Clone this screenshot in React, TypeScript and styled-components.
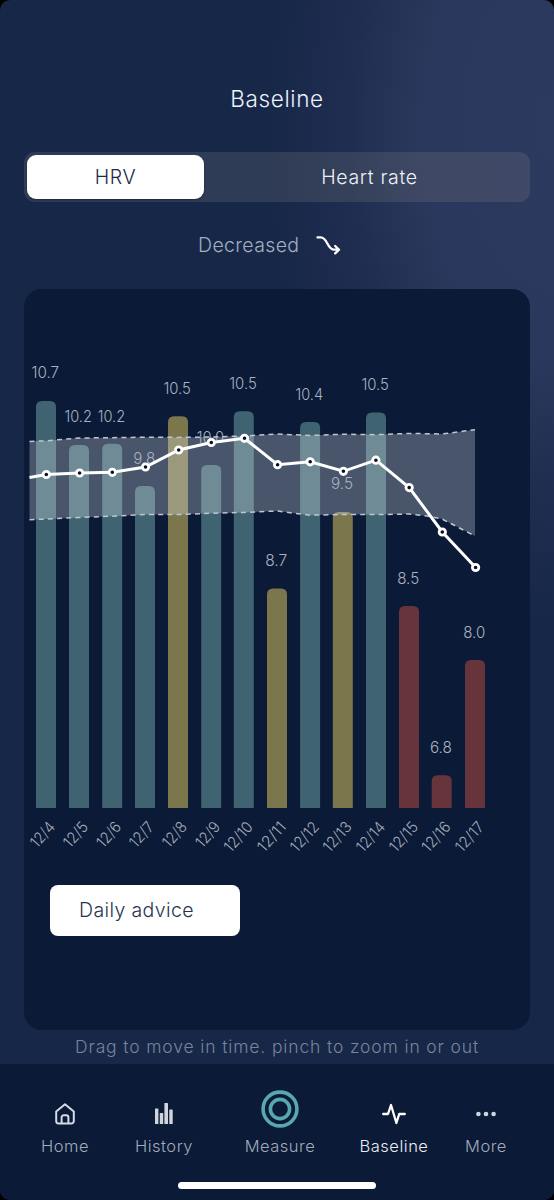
import React from "react";
import styled, { createGlobalStyle, css } from "styled-components";

const GlobalStyle = createGlobalStyle`
  * { box-sizing: border-box; }
  html, body { margin: 0; background: #000; }
  body, button { font-family: Inter, "Liberation Sans", sans-serif; font-weight: 350; }
`;

const Screen = styled.div`
  width: 554px;
  height: 1200px;
  display: flex;
  flex-direction: column;
  overflow: hidden;
  border-radius: 10px;
  background:
    radial-gradient(ellipse 290px 500px at 554px 130px, #2d3a60 0%, #2b385d 45%, rgba(36, 50, 85, 0.65) 70%, rgba(23, 39, 72, 0) 100%),
    #172748;
`;

const Header = styled.header`
  padding-top: 84px;
  height: 152px;
  text-align: center;
`;

const Title = styled.h1`
  margin: 0;
  color: #eef2fb;
  font-size: 22.5px;
  line-height: 29px;
  font-weight: 350;
  letter-spacing: 0.65px;
`;

const Segments = styled.div`
  display: flex;
  margin: 0 24px;
  height: 50px;
  padding: 3px;
  border-radius: 11px;
  background: rgba(128, 128, 128, 0.23);
`;

const Segment = styled.button<{ $active?: boolean }>`
  border: 0;
  padding: 0;
  border-radius: 9px;
  font-size: 19.5px;
  letter-spacing: 0.65px;
  ${({ $active }) =>
    $active
      ? css`
          width: 177px;
          background: #fff;
          color: #1b2a4a;
          box-shadow: 0 1px 2px rgba(0, 0, 0, 0.35);
        `
      : css`
          flex: 1;
          padding-left: 8px;
          background: transparent;
          color: #eef1f8;
        `}
`;

const Trend = styled.div`
  display: flex;
  align-items: center;
  height: 87px;
  padding: 0 0 2px 198px;
  gap: 17px;
  color: #a3aec1;
  font-size: 19.5px;
  letter-spacing: 0.35px;
`;

const Card = styled.main`
  margin: 0 24px;
  height: 741px;
  border-radius: 18px;
  background: #0b1a37;
  flex-shrink: 0;
`;

const Chart = styled.svg`
  display: block;
  font-size: 15.5px;
`;

const AdviceButton = styled.button`
  display: flex;
  align-items: center;
  margin: 20px 0 0 26px;
  width: 190px;
  height: 51px;
  padding: 0 0 1px 29px;
  border: 0;
  border-radius: 8px;
  background: #fff;
  color: #26344f;
  font-size: 19.5px;
  letter-spacing: 0.38px;
  white-space: nowrap;
`;

const Hint = styled.p`
  margin: 0;
  height: 34px;
  line-height: 34px;
  text-align: center;
  color: #79849a;
  font-size: 17.5px;
  letter-spacing: 0.86px;
  white-space: nowrap;
`;

const Footer = styled.footer`
  flex: 1;
  display: flex;
  flex-direction: column;
  background: #0b1a37;
`;

const Nav = styled.nav`
  display: grid;
  grid-template-columns: 114px 84px 148px 80px 104px;
  padding: 26px 0 0 8px;
  height: 118px;
`;

const NavItem = styled.a<{ $active?: boolean }>`
  display: flex;
  flex-direction: column;
  align-items: center;
  color: ${({ $active }) => ($active ? "#e9edf6" : "#a2abbc")};
  font-size: 16.5px;
  line-height: 20px;
  letter-spacing: 0.5px;
`;

const IconSlot = styled.span<{ $large?: boolean }>`
  height: ${({ $large }) => ($large ? "38px" : "47px")};
  margin-bottom: ${({ $large }) => ($large ? "8px" : "-1px")};
  display: flex;
  align-items: center;
`;

const HomeIndicator = styled.div`
  align-self: center;
  width: 198px;
  height: 7px;
  border-radius: 4px;
  background: #fff;
`;

const TEAL = "#3f6371";
const GOLD = "#7b764c";
const RED = "#67343c";

type Day = { x: number; top: number; color: string; value: string; labelY: number; date: string };

const days: Day[] = [
  { x: 46, top: 401, color: TEAL, value: "10.7", labelY: 378, date: "12/4" },
  { x: 79, top: 445, color: TEAL, value: "10.2", labelY: 422, date: "12/5" },
  { x: 112.2, top: 443.7, color: TEAL, value: "10.2", labelY: 421.5, date: "12/6" },
  { x: 145, top: 486, color: TEAL, value: "9.8", labelY: 463.5, date: "12/7" },
  { x: 178, top: 416.3, color: GOLD, value: "10.5", labelY: 393.5, date: "12/8" },
  { x: 211.2, top: 465, color: TEAL, value: "10.0", labelY: 442.5, date: "12/9" },
  { x: 243.8, top: 411.2, color: TEAL, value: "10.5", labelY: 389, date: "12/10" },
  { x: 277, top: 588.5, color: GOLD, value: "8.7", labelY: 565.5, date: "12/11" },
  { x: 310.1, top: 422, color: TEAL, value: "10.4", labelY: 399.5, date: "12/12" },
  { x: 342.8, top: 512, color: GOLD, value: "9.5", labelY: 489, date: "12/13" },
  { x: 376, top: 412.5, color: TEAL, value: "10.5", labelY: 390, date: "12/14" },
  { x: 409, top: 606, color: RED, value: "8.5", labelY: 584, date: "12/15" },
  { x: 441.7, top: 775.3, color: RED, value: "6.8", labelY: 752.5, date: "12/16" },
  { x: 475, top: 660, color: RED, value: "8.0", labelY: 637.5, date: "12/17" },
];

const BASE = 808;

const trend: [number, number][] = [
  [46.3, 474.5], [79.6, 473], [112.3, 472.3], [145.5, 467], [178.7, 450], [211.3, 442.5], [244.5, 438.3],
  [277.6, 464.7], [310.2, 461.8], [343.4, 471.3], [375.9, 460.2], [409.2, 487.6], [442.3, 532], [475.6, 567.5],
];
const upper = "29.5,441.5 46,440.8 79,438 112,437.7 145,437.2 178,437.4 211,437 244,436 277,434 310,435.5 343,434.2 376,434.7 409,433.4 442,434 475,429.7";
const lower = "29.5,519.8 79,517.5 112,516.2 145,514.6 178,514.6 211,513.2 244,512.4 277,511 310,515.2 343,514.6 376,514.6 409,514 427,516 442,519 475,536";

const barPath = ({ x, top }: Day) =>
  `M${x - 10} ${BASE}V${top + 6}q0-6 6-6h8q6 0 6 6V${BASE}z`;

function BaselineChart() {
  const band = `${upper} ${lower.split(" ").reverse().join(" ")}`;
  return (
    <Chart width={506} height={576} viewBox="24 289 506 576">
      {days.map((d) => (
        <path key={d.date} d={barPath(d)} fill={d.color} />
      ))}
      <polygon points={band} fill="#f2faff" fillOpacity={0.262} />
      {days.map((d) => {
        const w = d.value.length === 4 ? 27.5 : 22;
        return (
          <text key={d.date} x={d.x - 0.8 - w / 2} y={d.labelY} textLength={w} lengthAdjust="spacingAndGlyphs" fill="#a9b2c0">
            {d.value}
          </text>
        );
      })}
      <g fill="none" stroke="#bfc6d2" strokeWidth={1.5} strokeDasharray="5 4.2">
        <polyline points={upper} />
        <polyline points={lower} />
      </g>
      <polyline
        points={`29.5,477.6 ${trend.map((p) => p.join(",")).join(" ")}`}
        fill="none"
        stroke="#fff"
        strokeWidth={3}
      />
      {trend.map(([x, y]) => (
        <circle key={x} cx={x} cy={y} r={3.2} fill="#0b1020" stroke="#fff" strokeWidth={2.8} />
      ))}
      {days.map((d) => (
        <text
          key={d.date}
          transform={`translate(${d.x + 10} 827.5) rotate(-48)`}
          textAnchor="end"
          textLength={d.date.length === 4 ? 28.5 : 34.5}
          lengthAdjust="spacingAndGlyphs"
          fill="#a3acbb"
        >
          {d.date}
        </text>
      ))}
    </Chart>
  );
}

const TrendDownIcon = () => (
  <svg width="25" height="20" viewBox="0 0 25 20" fill="none" stroke="#fff" strokeWidth="2.3" strokeLinecap="round" strokeLinejoin="round">
    <path d="M1.5 2.4h3.2c7 0 6.3 12.300 13.500 12.300h4.800M19.200 11l3.800 3.700-3.800 3.700" />
  </svg>
);

const HomeIcon = () => (
  <svg width="20" height="22" viewBox="0 0 20 22" fill="none" stroke="#d5dae3" strokeWidth="2" strokeLinejoin="round">
    <path d="M1.200 8.600 10 1.200l8.800 7.400v9.400a2.600 2.600 0 0 1-2.600 2.600H3.800a2.600 2.600 0 0 1-2.600-2.600z" />
    <path d="M6.600 20.600v-6.200a2.200 2.200 0 0 1 2.200-2.200h2.400a2.200 2.200 0 0 1 2.200 2.200v6.200" />
  </svg>
);

const HistoryIcon = () => (
  <svg width="18" height="21" viewBox="0 0 18 21" fill="#d0d4dd">
    <rect x="0" y="5.500" width="3.400" height="15.500" rx=".6" />
    <rect x="4.800" y="10" width="3.400" height="11" rx=".6" />
    <rect x="9.400" y="0" width="3.600" height="21" rx=".6" />
    <rect x="14.300" y="6.500" width="3.400" height="14.500" rx=".6" />
  </svg>
);

const MeasureIcon = () => (
  <svg width="38" height="38" viewBox="0 0 38 38" fill="none" stroke="#58a9ae" strokeWidth="3.600">
    <circle cx="19" cy="19" r="16.900" />
    <circle cx="19" cy="19" r="9.600" />
  </svg>
);

const PulseIcon = () => (
  <svg width="24" height="22" viewBox="0 0 24 22" fill="none" stroke="#fff" strokeWidth="2.300" strokeLinecap="round" strokeLinejoin="round">
    <path d="M1.200 11h4.800L9 2l5.400 18L17.200 11h5.600" />
  </svg>
);

const MoreIcon = () => (
  <svg width="20" height="6" viewBox="0 0 20 6" fill="#d0d5df">
    <circle cx="2.400" cy="3" r="2.300" />
    <circle cx="10" cy="3" r="2.300" />
    <circle cx="17.600" cy="3" r="2.300" />
  </svg>
);

const navItems = [
  { label: "Home", Icon: HomeIcon },
  { label: "History", Icon: HistoryIcon },
  { label: "Measure", Icon: MeasureIcon, large: true },
  { label: "Baseline", Icon: PulseIcon, active: true },
  { label: "More", Icon: MoreIcon },
];

export default function App() {
  return (
    <>
      <GlobalStyle />
      <Screen>
        <Header>
          <Title>Baseline</Title>
        </Header>
        <Segments>
          <Segment $active>HRV</Segment>
          <Segment>Heart rate</Segment>
        </Segments>
        <Trend>
          <span>Decreased</span>
          <TrendDownIcon />
        </Trend>
        <Card>
          <BaselineChart />
          <AdviceButton>Daily advice</AdviceButton>
        </Card>
        <Hint>Drag to move in time. pinch to zoom in or out</Hint>
        <Footer>
          <Nav>
            {navItems.map(({ label, Icon, active, large }) => (
              <NavItem key={label} $active={active}>
                <IconSlot $large={large}>
                  <Icon />
                </IconSlot>
                {label}
              </NavItem>
            ))}
          </Nav>
          <HomeIndicator />
        </Footer>
      </Screen>
    </>
  );
}
